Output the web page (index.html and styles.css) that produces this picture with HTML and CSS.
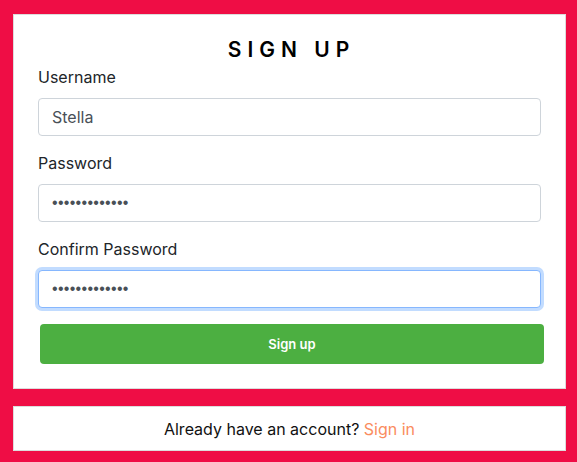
FILE: index.html
```html
<!DOCTYPE html>
<html lang="en">
<head>
<meta charset="utf-8">
<title>Sign up</title>
<link rel="stylesheet" href="styles.css">
</head>
<body>
<main class="page">
  <section class="card signup">
    <h1 class="title">SIGN UP</h1>
    <form class="form">
      <label class="label" for="u">Username</label>
      <input class="field" id="u" type="text" value="Stella">
      <label class="label" for="p">Password</label>
      <input class="field secret" id="p" type="password" value="stella1234567">
      <label class="label" for="c">Confirm Password</label>
      <input class="field secret focus" id="c" type="password" value="stella1234567">
      <button class="btn" type="button">Sign up</button>
    </form>
  </section>
  <section class="card footer">
    <p class="switch">Already have an account? <a class="link" href="#">Sign in</a></p>
  </section>
</main>
</body>
</html>
```
FILE: styles.css
```css
* { box-sizing: border-box; }
html, body { margin: 0; padding: 0; }
body {
  background: #ef0d45;
  font-family: Inter, "DejaVu Sans", sans-serif;
  color: #212529;
}
.page {
  padding: 14px 11px 11px 13px;
  display: flex;
  flex-direction: column;
  gap: 17px;
  height: 462px;
}
.card {
  background: #fff;
  border: 1px solid #dcdcdc;
}
.signup {
  padding: 22px 24px 24px 24px;
}
.title {
  margin: 0 0 2px;
  text-align: center;
  font-size: 21px;
  line-height: 26px;
  font-weight: 600;
  letter-spacing: 6px;
  padding-left: 4px;
  color: #000;
}
.form {
  display: flex;
  flex-direction: column;
}
.label {
  font-size: 16px;
  line-height: 24px;
  margin-bottom: 9px;
  color: #212529;
}
.field {
  height: 38px;
  border: 1px solid #ced4da;
  border-radius: 4px;
  padding: 0 13px;
  font: 16px Inter, "DejaVu Sans", sans-serif;
  color: #495057;
  margin-bottom: 15px;
  outline: none;
  width: 100%;
}
.secret {
  font-family: "Liberation Sans", Arial, sans-serif;
  letter-spacing: 0.3px;
}
.focus {
  border-color: #86b7fe;
  box-shadow: 0 0 0 3px #c2dcff;
  margin-bottom: 16px;
}
.btn {
  margin-left: 2px;
  width: 504px;
  height: 40px;
  background: #4caf41;
  border: none;
  border-radius: 4px;
  color: #fff;
  font: 600 13px Inter, "DejaVu Sans", sans-serif;
}
.footer {
  height: 45px;
  display: flex;
  align-items: center;
  justify-content: center;
}
.switch {
  margin: 0;
  font-size: 16px;
  color: #111;
}
.link {
  color: #fa8c5e;
  text-decoration: none;
}
```
